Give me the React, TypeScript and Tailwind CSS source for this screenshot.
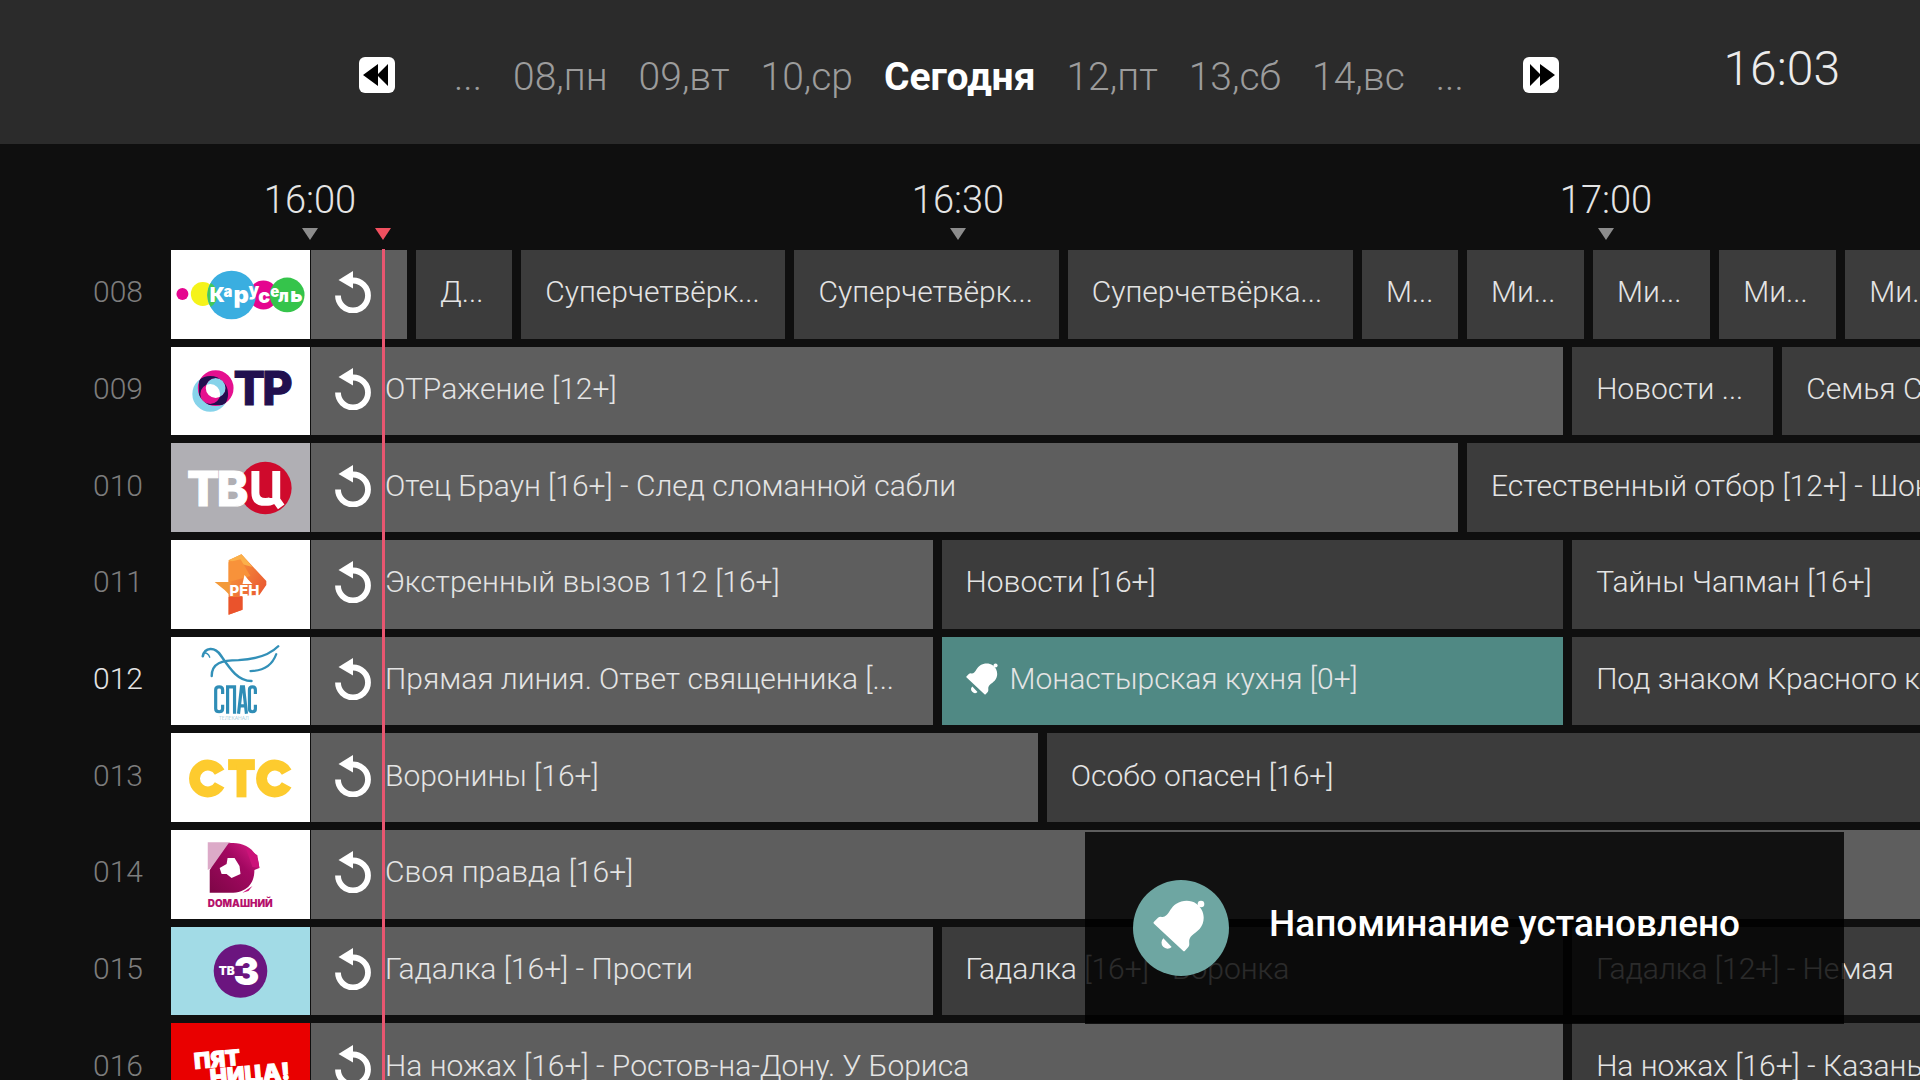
import React from "react";

type Show = { start: number; end: number; title?: string; reminder?: boolean };
type Channel = { number: string; name: string; logo: React.ReactNode; logoBg: string; active?: boolean; shows: Show[] };

const VISIBLE_MINUTES = 76.55;

function ReplayIcon() {
  return (
    <svg viewBox="0 0 36 42" className="mb-1 h-[42px] w-9 shrink-0" aria-hidden="true">
      <path d="M3 24.5 A15 15 0 1 0 18 9.5" fill="none" stroke="#fff" strokeWidth="5.8" />
      <path d="M3.5 9 L18 0 V17.5 Z" fill="#fff" />
    </svg>
  );
}

function BellIcon({ className }: { className: string }) {
  return (
    <svg viewBox="0 0 156 156" className={className} fill="#fff" aria-hidden="true">
      <path d="M3 71 Q0 68 3 65 L15 53 Q20 49 27 51 Q34 52 40 46 C49 38 54 21 70 11 C88 0 113 -1 130 11 C149 25 157 48 149 71 C140 96 115 101 110 116 C106 124 112 134 106 141 L96 152 Q93 155 90 152 Z" />
      <circle cx="144" cy="12" r="10" />
      <path d="M31 115 L56 141 A17 17 0 0 1 31 115 Z" />
    </svg>
  );
}

function DoubleArrow({ flip = false }: { flip?: boolean }) {
  return (
    <svg viewBox="0 0 36 36" className="size-9" aria-hidden="true">
      <path
        d={flip ? "M7 7 L17 17 V7 L32 18 L17 29 V19 L7 29 Z" : "M29 7 L19 17 V7 L4 18 L19 29 V19 L29 29 Z"}
        fill="#000"
      />
    </svg>
  );
}

const heavy = "Inter, 'Open Sans', sans-serif";

const KaruselLogo = (
  <svg viewBox="0 0 140 88" className="h-22 w-35">
    <circle cx="11.5" cy="44" r="6" fill="#e5058f" />
    <circle cx="32" cy="44" r="12" fill="#f5f31b" />
    <circle cx="93" cy="45" r="14.5" fill="#e5058f" />
    <circle cx="117" cy="45" r="17.5" fill="#35c44b" />
    <circle cx="61" cy="45" r="24.5" fill="#3aaee0" />
    <path d="M40 33 A24.5 24.5 0 0 0 40 57 A14 14 0 0 0 40 33" fill="#41c95a" />
    <g fill="#fff" fontFamily={heavy} fontWeight="900">
      <text x="39" y="52" fontSize="20">К</text>
      <text x="53" y="47" fontSize="15">а</text>
      <text x="63" y="53" fontSize="24">р</text>
      <text x="78" y="46" fontSize="17">у</text>
      <text x="88" y="53" fontSize="20">с</text>
      <text x="100" y="47" fontSize="15">е</text>
      <text x="108" y="52" fontSize="17">л</text>
      <text x="120" y="52" fontSize="20">ь</text>
    </g>
  </svg>
);

const OtrLogo = (
  <svg viewBox="0 0 140 88" className="h-22 w-35">
    <mask id="otr-ring">
      <circle cx="39.5" cy="47" r="14" fill="none" stroke="#fff" strokeWidth="8" />
    </mask>
    <g fill="none" strokeWidth="8">
      <circle cx="39.5" cy="47" r="14" stroke="#86d3ea" />
      <circle cx="45" cy="41" r="14" stroke="#e5108f" />
      <circle cx="45" cy="41" r="14" stroke="#22104f" mask="url(#otr-ring)" />
    </g>
    <g fill="#22104f" stroke="#22104f" strokeWidth="1" fontFamily={heavy} fontWeight="800" fontSize="47">
      <text x="63" y="58">Т</text>
      <text x="92" y="58">Р</text>
    </g>
  </svg>
);

const TvcLogo = (
  <svg viewBox="0 0 140 88" className="h-22 w-35">
    <circle cx="95" cy="44" r="26.5" fill="#cf0a2c" />
    <g fill="#fff" stroke="#fff" strokeWidth="1" fontFamily={heavy} fontWeight="800" fontSize="48">
      <text x="16" y="62">Т</text>
      <text x="46" y="62">В</text>
    </g>
    <path d="M85 27 V49 Q85 58 95 58 Q103 58 103 54 M106 27 V56 L111 63" fill="none" stroke="#fff" strokeWidth="8" />
  </svg>
);

const RenLogo = (
  <svg viewBox="0 0 140 88" className="h-22 w-35">
    <defs>
      <linearGradient id="ren" x1="0" y1="0" x2="1" y2="1">
        <stop offset="0" stopColor="#f9a03c" />
        <stop offset="1" stopColor="#e5452f" />
      </linearGradient>
    </defs>
    <path d="M58 20 L71 14 L96 41 V45 L89 55 L72 56 V70 L58 75 Z" fill="url(#ren)" />
    <path d="M44 42 H60 V56 L54 50 Z" fill="#f39a3a" />
    <path d="M58 20 L71 14 L82 27 L72 24 Z" fill="#fbb04a" />
    <path d="M58 22 L70 19 L80 36 L58 42 Z" fill="#f8923a" />
    <path d="M58 57 H72 V70 L58 75 Z" fill="#ea532c" />
    <text x="59" y="56" fill="#fff" fontFamily={heavy} fontWeight="800" fontSize="15">РЕН</text>
    <path d="M74 35 L78 40 L82 44 L72 44 Z" fill="#fff" />
  </svg>
);

const SpasLogo = (
  <svg viewBox="0 0 140 88" className="h-22 w-35">
    <g fill="none" stroke="#3290b8" strokeLinecap="round">
      <path d="M32 19 C34 10 44 9 50 18 C59 31 67 44 81 44" strokeWidth="2.6" />
      <path d="M41 39 C41 26 51 23 68 23 C88 22 101 16 108 9" strokeWidth="2.4" />
      <path d="M106 17 C102 28 94 34 80 34" strokeWidth="2.2" />
      <path d="M33 16 Q37 15 39 20" strokeWidth="1.4" />
    </g>
    <g fill="none" stroke="#2f8db6" strokeWidth="3.2">
      <path d="M52 57 V53 Q52 50 48.500 50 Q45 50 45 53 V72 Q45 75 48.500 75 Q52 75 52 72 V68" />
      <path d="M57 77 V50 H64 V77" />
      <path d="M68 77 L71 50 H73 L76 77 M69 69 H75" />
      <path d="M85 57 V53 Q85 50 82 50 Q79 50 79 53 V72 Q79 75 82 75 Q85 75 85 72 V68" />
    </g>
    <text x="48" y="83" fill="#8fbfd4" fontFamily={heavy} fontSize="5">ТЕЛЕКАНАЛ</text>
  </svg>
);

const CtsLogo = (
  <svg viewBox="0 0 140 88" className="h-22 w-35">
    <g fill="none" stroke="#fdcb2e" strokeWidth="11">
      <path d="M49 38 A13.5 13.5 0 1 0 49 51" />
      <path d="M116.500 38 A13.5 13.5 0 1 0 116.500 51" />
      <path d="M57.500 30.500 H84.500" />
      <path d="M71 30 V63.500" strokeWidth="10" />
    </g>
  </svg>
);

const DomashnyLogo = (
  <svg viewBox="0 0 140 88" className="h-22 w-35">
    <defs>
      <linearGradient id="dom" x1="0" y1="1" x2="1" y2="0">
        <stop offset="0" stopColor="#7d0646" />
        <stop offset=".6" stopColor="#a30861" />
        <stop offset="1" stopColor="#e0218a" />
      </linearGradient>
    </defs>
    <path d="M37 12 H60 L44 36 L37 40 Z" fill="#dcaac8" />
    <path d="M39 63 V40 L58 13 C72 11 88 18 89 38 L84 40 C84 54 76 63 60 63 Z" fill="url(#dom)" />
    <path d="M75 17 L87 25 L89 38 L82 37 Z" fill="#cb1379" />
    <path d="M72 63 L82 56 L78 61 Z" fill="#cb1379" />
    <path d="M49 38 L56 34 L57 28 L64 28 L69 36 L70 44 L61 48 L56 44 L51 44 Z" fill="#fff" />
    <text x="37" y="77" fill="#b5106b" fontFamily={heavy} fontWeight="900" fontSize="10">DОМАШНИЙ</text>
  </svg>
);

const Tv3Logo = (
  <svg viewBox="0 0 140 88" className="h-22 w-35">
    <circle cx="70" cy="44" r="27" fill="#6b157f" />
    <g fill="#fff" fontFamily={heavy} fontWeight="900">
      <text x="48" y="48" fontSize="12">ТВ</text>
      <text x="63" y="58" fontSize="39">3</text>
    </g>
  </svg>
);

const PyatnitsaLogo = (
  <svg viewBox="0 0 140 88" className="h-22 w-35">
    <g fill="#fff" stroke="#fff" strokeWidth="1" fontFamily={heavy} fontWeight="900">
      <text x="24" y="45" fontSize="22" transform="rotate(-5 24 45)">ПЯТ</text>
      <text x="40" y="62" fontSize="23" transform="rotate(-5 40 62)">НИЦА!</text>
    </g>
  </svg>
);

const channels: Channel[] = [
  {
    number: "008", name: "Карусель", logo: KaruselLogo, logoBg: "bg-white",
    shows: [
      { start: 0, end: 5 },
      { start: 5, end: 10, title: "Д..." },
      { start: 10, end: 23, title: "Суперчетвёрк..." },
      { start: 23, end: 36, title: "Суперчетвёрк..." },
      { start: 36, end: 50, title: "Суперчетвёрка..." },
      { start: 50, end: 55, title: "М..." },
      { start: 55, end: 61, title: "Ми..." },
      { start: 61, end: 67, title: "Ми..." },
      { start: 67, end: 73, title: "Ми..." },
      { start: 73, end: 79, title: "Ми..." },
    ],
  },
  {
    number: "009", name: "ОТР", logo: OtrLogo, logoBg: "bg-white",
    shows: [
      { start: 0, end: 60, title: "ОТРажение [12+]" },
      { start: 60, end: 70, title: "Новости ..." },
      { start: 70, end: 90, title: "Семья С" },
    ],
  },
  {
    number: "010", name: "ТВЦ", logo: TvcLogo, logoBg: "bg-[#b0afb4]",
    shows: [
      { start: 0, end: 55, title: "Отец Браун [16+] - След сломанной сабли" },
      { start: 55, end: 90, title: "Естественный отбор [12+] - Шок" },
    ],
  },
  {
    number: "011", name: "РЕН", logo: RenLogo, logoBg: "bg-white",
    shows: [
      { start: 0, end: 30, title: "Экстренный вызов 112 [16+]" },
      { start: 30, end: 60, title: "Новости [16+]" },
      { start: 60, end: 90, title: "Тайны Чапман [16+]" },
    ],
  },
  {
    number: "012", name: "Спас", logo: SpasLogo, logoBg: "bg-white", active: true,
    shows: [
      { start: 0, end: 30, title: "Прямая линия. Ответ священника [..." },
      { start: 30, end: 60, title: "Монастырская кухня [0+]", reminder: true },
      { start: 60, end: 90, title: "Под знаком Красного к" },
    ],
  },
  {
    number: "013", name: "СТС", logo: CtsLogo, logoBg: "bg-white",
    shows: [
      { start: 0, end: 35, title: "Воронины [16+]" },
      { start: 35, end: 90, title: "Особо опасен [16+]" },
    ],
  },
  {
    number: "014", name: "Домашний", logo: DomashnyLogo, logoBg: "bg-white",
    shows: [{ start: 0, end: 90, title: "Своя правда [16+]" }],
  },
  {
    number: "015", name: "ТВ3", logo: Tv3Logo, logoBg: "bg-[#a2dbe6]",
    shows: [
      { start: 0, end: 30, title: "Гадалка [16+] - Прости" },
      { start: 30, end: 60, title: "Гадалка [16+] - Воронка" },
      { start: 60, end: 90, title: "Гадалка [12+] - Немая" },
    ],
  },
  {
    number: "016", name: "Пятница!", logo: PyatnitsaLogo, logoBg: "bg-[#e90000]",
    shows: [
      { start: 0, end: 60, title: "На ножах [16+] - Ростов-на-Дону. У Бориса" },
      { start: 60, end: 90, title: "На ножах [16+] - Казань" },
    ],
  },
];

const days = ["...", "08,пн", "09,вт", "10,ср", "Сегодня", "12,пт", "13,сб", "14,вс", "..."];

function ShowCell({ show }: { show: Show }) {
  const onAir = show.start === 0;
  const color = show.reminder ? "bg-[#508984]" : onAir ? "bg-[#5e5e5e]" : "bg-[#3c3c3c]";
  return (
    <div className="h-full shrink-0 pr-[9px]" style={{ width: `${((show.end - show.start) / VISIBLE_MINUTES) * 100}%` }}>
      <button
        type="button"
        aria-label={show.title ?? "Смотреть сначала"}
        className={`flex h-full w-full items-center overflow-hidden pl-6 text-left whitespace-nowrap ${color}`}
      >
        {onAir && <ReplayIcon />}
        {show.reminder && <BellIcon className="mr-3 mb-1 size-8 shrink-0" />}
        {show.title && <span className={onAir ? "ml-3.5 pb-1" : "pb-1"}>{show.title}</span>}
      </button>
    </div>
  );
}

function ChannelRow({ channel }: { channel: Channel }) {
  return (
    <div className="flex min-h-0 items-stretch">
      <div className={`flex w-[171px] shrink-0 items-center pb-1 pl-[93px] ${channel.active ? "text-[#e4e4e4]" : "text-[#7d7d7d]"}`}>
        {channel.number}
      </div>
      <div className={`mr-px flex w-[139px] shrink-0 items-center justify-center overflow-hidden ${channel.logoBg}`} role="img" aria-label={channel.name}>
        {channel.logo}
      </div>
      <div className="flex min-w-0 flex-1">
        {channel.shows.map((s) => (
          <ShowCell key={s.start} show={s} />
        ))}
      </div>
    </div>
  );
}

export default function App() {
  return (
    <div className="relative flex h-screen flex-col overflow-hidden bg-[#0f0f0f] font-['Roboto',sans-serif] text-[30px] leading-9 font-light text-[#e4e4e4]">
      <header className="flex h-36 shrink-0 items-start bg-[#2b2b2b] pr-20 pl-[359px]">
        <button type="button" aria-label="Назад" className="mt-[57px] rounded-md bg-white">
          <DoubleArrow />
        </button>
        <nav className="mt-[53px] ml-[59px] flex gap-[31px] text-[39px] leading-12 text-[#9c9c9c]">
          {days.map((d, i) => (
            <a key={i} href="#day" className={d === "Сегодня" ? "font-bold text-white" : ""}>
              {d}
            </a>
          ))}
        </nav>
        <button type="button" aria-label="Вперёд" className="mt-[57px] ml-[59px] rounded-md bg-white">
          <DoubleArrow flip />
        </button>
        <time className="mt-[41px] ml-auto text-5xl leading-14 text-[#ececec]">16:03</time>
      </header>

      <div className="flex h-[106px] shrink-0 items-start justify-between pt-8 pr-[264px] pl-[260px] text-[38px] leading-12">
        {["16:00", "16:30", "17:00"].map((t) => (
          <div key={t} className="flex w-[100px] flex-col items-center gap-1">
            <time>{t}</time>
            <svg viewBox="0 0 16 12" className="h-3 w-4" aria-hidden="true">
              <path d="M0 0 H16 L8 12 Z" fill="#8c8c8c" />
            </svg>
          </div>
        ))}
      </div>

      <main className="-mb-8 grid flex-1 auto-rows-fr gap-2">
        {channels.map((c) => (
          <ChannelRow key={c.number} channel={c} />
        ))}
      </main>

      <div className="absolute top-[228px] bottom-0 left-[375px] flex flex-col items-center gap-[9px]">
        <svg viewBox="0 0 16 12" className="h-3 w-4" aria-hidden="true">
          <path d="M0 0 H16 L8 12 Z" fill="#f0505f" />
        </svg>
        <div className="w-[3px] flex-1 bg-[#e85670]" />
      </div>

      <div role="status" className="absolute right-[76px] bottom-14 flex h-48 w-[759px] items-center bg-black/81 pl-12 text-white">
        <div className="flex size-24 items-center justify-center rounded-full bg-[#6ea6a2]">
          <BellIcon className="mr-1 mb-1 size-[52px]" />
        </div>
        <p className="ml-10 pb-2 text-[37px] font-medium">Напоминание установлено</p>
      </div>
    </div>
  );
}
